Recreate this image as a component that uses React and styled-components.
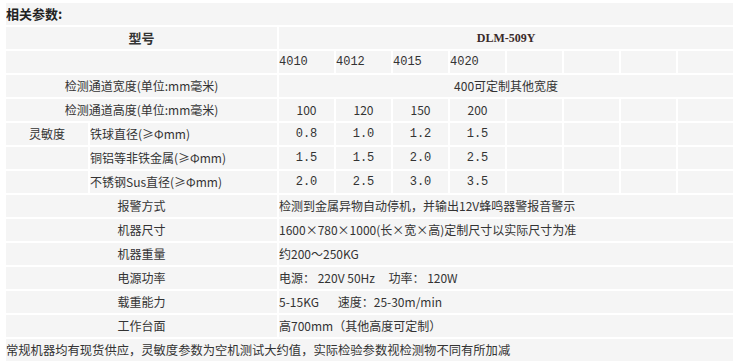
import React from "react";
import styled, { createGlobalStyle } from "styled-components";

const GlobalStyle = createGlobalStyle`
  html, body {
    margin: 0;
    padding: 0;
    background: #fff;
    overflow: hidden;
  }
  body {
    font-family: "Noto Sans CJK SC", "Liberation Sans", sans-serif;
    color: #333;
  }
`;

const sizes = [
  { model: "4010", height: "100", ball: "0.8", copper: "1.5", steel: "2.0" },
  { model: "4012", height: "120", ball: "1.0", copper: "1.5", steel: "2.5" },
  { model: "4015", height: "150", ball: "1.2", copper: "2.0", steel: "3.0" },
  { model: "4020", height: "200", ball: "1.5", copper: "2.5", steel: "3.5" },
];

const EMPTY_COLS = 4;

const sensitivity = [
  { label: "铁球直径(≥Φmm)", key: "ball", title: "灵敏度" },
  { label: "铜铝等非铁金属(≥Φmm)", key: "copper" },
  { label: "不锈钢Sus直径(≥Φmm)", key: "steel" },
];

const specs = [
  { label: "报警方式", value: "检测到金属异物自动停机，并输出12V蜂鸣器警报音警示" },
  { label: "机器尺寸", value: "1600×780×1000(长×宽×高)定制尺寸以实际尺寸为准" },
  { label: "机器重量", value: "约200～250KG" },
  { label: "电源功率", value: "电源： 220V 50Hz     功率： 120W" },
  { label: "载重能力", value: "5-15KG       速度：25-30m/min" },
  { label: "工作台面", value: "高700mm（其他高度可定制）" },
];

const App = () => {
  const blanks = Array.from({ length: EMPTY_COLS });

  return (
    <>
      <GlobalStyle />
      <Page>
        <ParamTable>
          <colgroup>
            <col style={{ width: 82 }} />
            <col style={{ width: 187 }} />
            {Array.from({ length: 8 }).map((_, i) => (
              <col key={i} style={{ width: 55 }} />
            ))}
          </colgroup>
          <tbody>
            <tr>
              <TitleCell colSpan={10}>相关参数:</TitleCell>
            </tr>
            <tr>
              <HeadCell colSpan={2}>型号</HeadCell>
              <ModelCell colSpan={8}>DLM-509Y</ModelCell>
            </tr>
            <tr>
              <Cell colSpan={2} />
              {sizes.map((s) => (
                <Cell key={s.model} $mono>
                  {s.model}
                </Cell>
              ))}
              {blanks.map((_, i) => (
                <Cell key={i} />
              ))}
            </tr>
            <tr>
              <Cell colSpan={2} $align="center">
                检测通道宽度(单位:mm毫米)
              </Cell>
              <Cell colSpan={8} $align="center">
                400可定制其他宽度
              </Cell>
            </tr>
            <tr>
              <Cell colSpan={2} $align="center">
                检测通道高度(单位:mm毫米)
              </Cell>
              {sizes.map((s) => (
                <Cell key={s.model} $align="center">
                  {s.height}
                </Cell>
              ))}
              {blanks.map((_, i) => (
                <Cell key={i} />
              ))}
            </tr>
            {sensitivity.map((row) => (
              <tr key={row.key}>
                <Cell $align="center">{row.title}</Cell>
                <Cell>{row.label}</Cell>
                {sizes.map((s) => (
                  <Cell key={s.model} $align="center" $mono>
                    {s[row.key]}
                  </Cell>
                ))}
                {blanks.map((_, i) => (
                  <Cell key={i} />
                ))}
              </tr>
            ))}
            {specs.map((row) => (
              <tr key={row.label}>
                <Cell colSpan={2} $align="center">
                  {row.label}
                </Cell>
                <Cell colSpan={8}>{row.value}</Cell>
              </tr>
            ))}
            <tr>
              <NoteCell colSpan={10}>
                常规机器均有现货供应，灵敏度参数为空机测试大约值，实际检验参数视检测物不同有所加减
              </NoteCell>
            </tr>
          </tbody>
        </ParamTable>
      </Page>
    </>
  );
};

export default App;

const Page = styled.div`
  padding: 1px 0 0 4px;
  width: 760px;
`;

const ParamTable = styled.table`
  table-layout: fixed;
  width: 731px;
  border-collapse: separate;
  border-spacing: 2px;
`;

const Cell = styled.td`
  height: 22px;
  padding: 0;
  background: #f5f5f5;
  font-size: 12px;
  line-height: 22px;
  white-space: pre;
  overflow: hidden;
  text-align: ${({ $align }) => $align || "left"};
  font-family: ${({ $mono }) =>
    $mono
      ? `"Liberation Mono", "Noto Sans CJK SC", monospace`
      : `"Noto Sans CJK SC", "Liberation Sans", sans-serif`};
`;

const TitleCell = styled(Cell)`
  font-size: 13px;
  font-weight: bold;
  color: #222;
`;

const HeadCell = styled(Cell)`
  text-align: center;
  font-size: 13px;
  font-weight: bold;
  color: #333;
`;

const ModelCell = styled(Cell)`
  text-align: center;
  font-family: "Liberation Serif", serif;
  font-size: 12px;
  font-weight: bold;
  color: #3a2a2a;
`;

const NoteCell = styled(Cell)`
  font-size: 12.3px;
`;
